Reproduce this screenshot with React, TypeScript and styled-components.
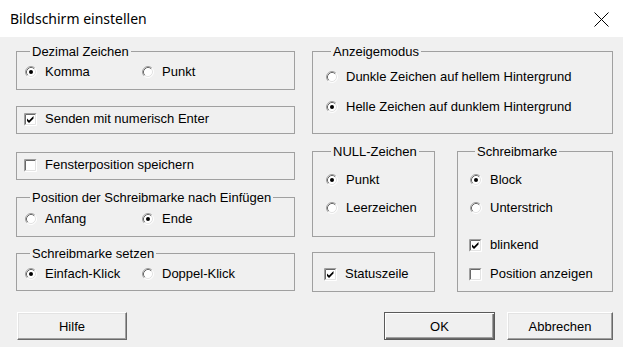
import React from "react";
import styled, {createGlobalStyle} from "styled-components";

//#region STYLES
const GlobalStyle = createGlobalStyle`
html, body {
    margin: 0;
    padding: 0;
    background: #f0f0f0;
}
body {
    font-family: "Liberation Sans", Arial, sans-serif;
    font-size: 13px;
    color: #000;
}
`

const Window = styled.div`
width: 623px;
height: 347px;
background: #f0f0f0;
display: flex;
flex-direction: column;
overflow: hidden;
`

const TitleBar = styled.div`
height: 37px;
flex: 0 0 37px;
background: #fff;
display: flex;
align-items: center;
justify-content: space-between;
padding: 0 14px 0 10px;
box-sizing: border-box;
`

const Title = styled.span`
font-family: "Noto Sans", "Open Sans", sans-serif;
font-size: 14px;
color: #000;
`

const CloseIcon = styled.svg`
display: block;
margin-top: 1px;
`

const Body = styled.div`
padding: 14px 10px 0 16px;
display: flex;
flex-direction: column;
`

const Columns = styled.div`
display: flex;
gap: 17px;
align-items: flex-start;
`

const Column = styled.div.attrs((props : {$width: number}) => props)`
width: ${props => props.$width}px;
display: flex;
flex-direction: column;
`

const SubRow = styled.div`
display: flex;
gap: 22px;
margin-top: 17px;
`

const GroupBox = styled.div.attrs((props : {$pad: string, $top?: number, $width?: number}) => props)`
border: 1px solid #a0a0a0;
padding: ${props => props.$pad};
margin-top: ${props => props.$top ?? 0}px;
width: ${props => props.$width ? props.$width + 'px' : 'auto'};
box-sizing: border-box;
display: flex;
flex-direction: column;
`

const Caption = styled.span`
display: block;
width: fit-content;
margin: -7px 0 0 6px;
padding: 0 2px;
height: 14px;
line-height: 14px;
background: #f0f0f0;
white-space: nowrap;
`

const Options = styled.div.attrs((props : {$top?: number}) => props)`
display: flex;
margin-top: ${props => props.$top ?? 0}px;
`

const Option = styled.label.attrs((props : {$width?: number, $top?: number}) => props)`
display: flex;
align-items: center;
height: 16px;
line-height: 16px;
gap: 8px;
margin-top: ${props => props.$top ?? 0}px;
width: ${props => props.$width ? props.$width + 'px' : 'auto'};
white-space: nowrap;
`

const Glyph = styled.span`
width: 13px;
height: 13px;
flex: 0 0 13px;
display: flex;
align-items: center;

svg {
    display: block;
}
`

const ButtonRow = styled.div`
display: flex;
margin-top: 20px;
padding-left: 1px;
`

const Button = styled.div.attrs((props : {$width: number, $default?: boolean}) => props)`
width: ${props => props.$width}px;
height: 28px;
box-sizing: border-box;
display: flex;
align-items: center;
justify-content: center;
background: #f0f0f0;
${props => props.$default ? `
    border: 1px solid #5a5a5a;
    box-shadow: inset 1px 1px #fff, inset -1px -1px #696969, inset -2px -2px #a0a0a0;
` : `
    border: 1px solid;
    border-color: #fff #696969 #696969 #fff;
    box-shadow: inset -1px -1px #a0a0a0, inset 1px 1px #e3e3e3;
`}
`

const Spacer = styled.div`
flex: 1;
`

const ButtonGap = styled.div`
width: 12px;
`
//#endregion

const Radio = ({checked}: {checked?: boolean}) => (
    <Glyph>
        <svg width="12" height="12" viewBox="0 0 12 12" style={{marginLeft: 1}}>
            <circle cx="6" cy="6" r="5" fill="#fff"/>
            <path d="M2.11 9.89 A5.5 5.5 0 0 1 9.89 2.11" fill="none" stroke="#a0a0a0"/>
            <path d="M9.89 2.11 A5.5 5.5 0 0 1 2.11 9.89" fill="none" stroke="#fff"/>
            <path d="M2.82 9.18 A4.5 4.5 0 0 1 9.18 2.82" fill="none" stroke="#696969"/>
            <path d="M9.18 2.82 A4.5 4.5 0 0 1 2.82 9.18" fill="none" stroke="#e3e3e3"/>
            {checked && <circle cx="6" cy="6" r="2" fill="#000"/>}
        </svg>
    </Glyph>
)

const Check = ({checked}: {checked?: boolean}) => (
    <Glyph>
        <svg width="13" height="13" viewBox="0 0 13 13">
            <rect x="1" y="1" width="11" height="11" fill="#fff"/>
            <path d="M0.5 12.5 V0.5 H12.5" fill="none" stroke="#a0a0a0"/>
            <path d="M0.5 12.5 H12.5 V0.5" fill="none" stroke="#fff"/>
            <path d="M1.5 11.5 V1.5 H11.5" fill="none" stroke="#696969"/>
            <path d="M1.5 11.5 H11.5 V1.5" fill="none" stroke="#e3e3e3"/>
            {checked && <polygon points="3,5.5 5,7.5 9.5,3 9.5,5.5 5,10 3,8" fill="#000"/>}
        </svg>
    </Glyph>
)

const App = () => {
    return (
        <>
            <GlobalStyle/>
            <Window>
                <TitleBar>
                    <Title>Bildschirm einstellen</Title>
                    <CloseIcon width="15" height="15" viewBox="0 0 15 15">
                        <path d="M0.5 0.5 L14.5 14.5 M14.5 0.5 L0.5 14.5" stroke="#000" strokeWidth="1"/>
                    </CloseIcon>
                </TitleBar>

                <Body>
                    <Columns>
                        <Column $width={279}>
                            <GroupBox $pad="0 0 9px 7px">
                                <Caption>Dezimal Zeichen</Caption>
                                <Options $top={5}>
                                    <Option $width={117}><Radio checked/>Komma</Option>
                                    <Option><Radio/>Punkt</Option>
                                </Options>
                            </GroupBox>

                            <GroupBox $pad="4px 0 6px 7px" $top={16}>
                                <Option><Check checked/>Senden mit numerisch Enter</Option>
                            </GroupBox>

                            <GroupBox $pad="4px 0 6px 7px" $top={18}>
                                <Option><Check/>Fensterposition speichern</Option>
                            </GroupBox>

                            <GroupBox $pad="0 0 9px 7px" $top={17}>
                                <Caption>Position der Schreibmarke nach Einfügen</Caption>
                                <Options $top={6}>
                                    <Option $width={117}><Radio/>Anfang</Option>
                                    <Option><Radio checked/>Ende</Option>
                                </Options>
                            </GroupBox>

                            <GroupBox $pad="0 0 8px 7px" $top={16}>
                                <Caption>Schreibmarke setzen</Caption>
                                <Options $top={5}>
                                    <Option $width={117}><Radio checked/>Einfach-Klick</Option>
                                    <Option><Radio/>Doppel-Klick</Option>
                                </Options>
                            </GroupBox>
                        </Column>

                        <Column $width={301}>
                            <GroupBox $pad="0 0 18px 12px">
                                <Caption>Anzeigemodus</Caption>
                                <Option $top={10}><Radio/>Dunkle Zeichen auf hellem Hintergrund</Option>
                                <Option $top={14}><Radio checked/>Helle Zeichen auf dunklem Hintergrund</Option>
                            </GroupBox>

                            <SubRow>
                                <Column $width={123}>
                                    <GroupBox $pad="0 0 20px 12px">
                                        <Caption>NULL-Zeichen</Caption>
                                        <Option $top={13}><Radio checked/>Punkt</Option>
                                        <Option $top={12}><Radio/>Leerzeichen</Option>
                                    </GroupBox>

                                    <GroupBox $pad="13px 0 9px 11px" $top={15}>
                                        <Option><Check checked/>Statuszeile</Option>
                                    </GroupBox>
                                </Column>

                                <GroupBox $pad="0 0 9px 11px" $width={156}>
                                    <Caption>Schreibmarke</Caption>
                                    <Option $top={13}><Radio checked/>Block</Option>
                                    <Option $top={12}><Radio/>Unterstrich</Option>
                                    <Option $top={21}><Check checked/>blinkend</Option>
                                    <Option $top={13}><Check/>Position anzeigen</Option>
                                </GroupBox>
                            </SubRow>
                        </Column>
                    </Columns>

                    <ButtonRow>
                        <Button $width={110}>Hilfe</Button>
                        <Spacer/>
                        <Button $width={111} $default>OK</Button>
                        <ButtonGap/>
                        <Button $width={106}>Abbrechen</Button>
                    </ButtonRow>
                </Body>
            </Window>
        </>
    )
}

export default App
